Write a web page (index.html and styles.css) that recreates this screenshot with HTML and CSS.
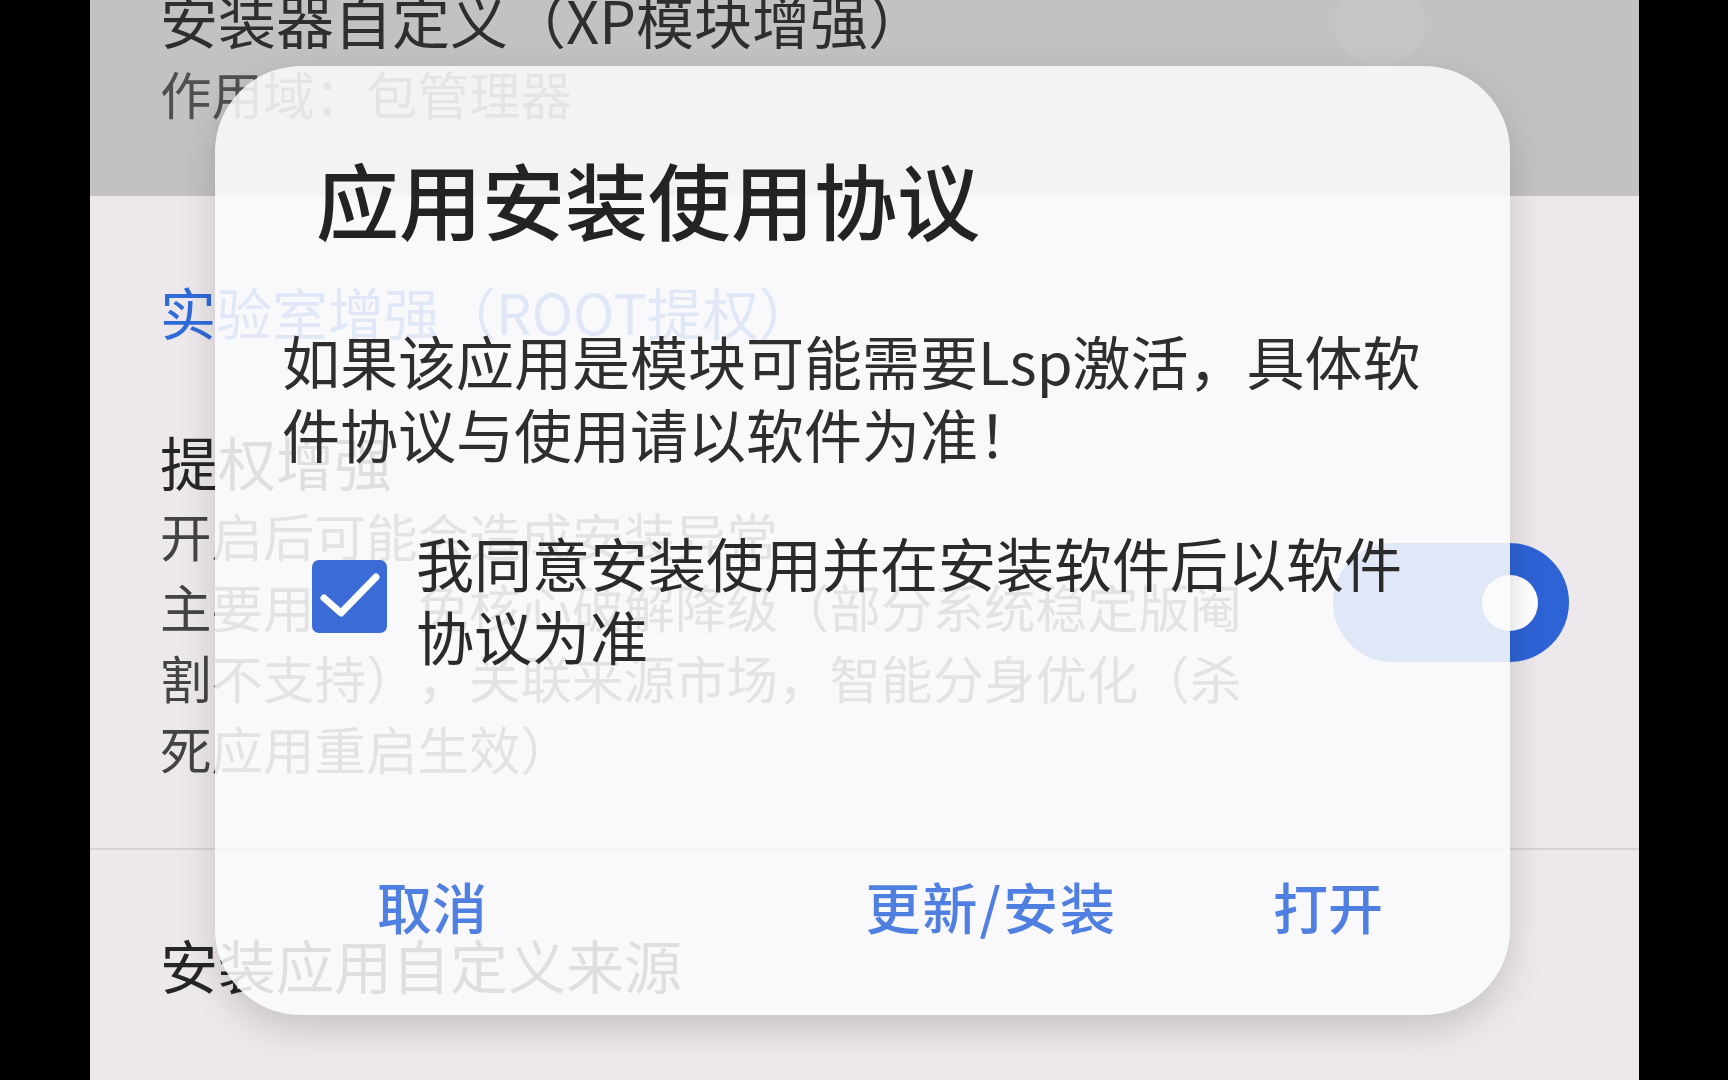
FILE: index.html
```html
<!DOCTYPE html>
<html lang="zh-CN">
<head>
  <meta charset="UTF-8" />
  <meta name="viewport" content="width=device-width, initial-scale=1.0"/>
  <title>安装器设置</title>
  <link rel="stylesheet" href="styles.css">
</head>
<body>
  <div class="screen">
    <div class="item item-dim">
      <div class="item-text">
        <div class="item-title">安装器自定义（XP模块增强）</div>
        <div class="item-sub">作用域：包管理器</div>
      </div>
      <div class="switch switch-off"><span class="thumb"></span></div>
    </div>

    <div class="section-title">实验室增强（ROOT提权）</div>

    <div class="item item-main">
      <div class="item-text">
        <div class="item-title">提权增强</div>
        <div class="item-desc">开启后可能会造成安装异常<br>主要用途：免核心破解降级（部分系统稳定版阉割不支持），关联来源市场，智能分身优化（杀死应用重启生效）</div>
      </div>
      <div class="switch switch-on"><span class="thumb"></span></div>
    </div>

    <div class="divider"></div>

    <div class="item item-last">
      <div class="item-title">安装应用自定义来源</div>
    </div>

    <!-- agreement dialog -->
    <div class="dialog">
      <div class="dialog-title">应用安装使用协议</div>
      <div class="dialog-body">如果该应用是模块可能需要Lsp激活，具体软件协议与使用请以软件为准！</div>
      <label class="agree">
        <svg class="checkbox" width="75" height="73" viewBox="0 0 75 73">
          <rect x="0" y="0" width="75" height="73" rx="7" fill="#3b6bd6"/>
          <polyline points="12,38 29,53 64,17" fill="none" stroke="#fff" stroke-width="7" stroke-linecap="round" stroke-linejoin="round"/>
        </svg>
        <span class="agree-text">我同意安装使用并在安装软件后以软件协议为准</span>
      </label>
      <div class="dialog-actions">
        <button class="btn btn-cancel">取消</button>
        <button class="btn btn-install">更新/安装</button>
        <button class="btn btn-open">打开</button>
      </div>
    </div>
  </div>
</body>
</html>
```

FILE: styles.css
```css
body {
  margin: 0;
  background: #000;
  font-family: "Noto Sans CJK SC", "Noto Sans", sans-serif;
  text-spacing-trim: space-all;
}
.screen {
  width: 1549px;
  height: 1080px;
  margin-left: 90px;
  background: #ece8ec;
  position: relative;
  overflow: hidden;
}
.item {
  display: flex;
  align-items: flex-start;
  gap: 60px;
  padding: 0 70px;
}
.item-text {
  flex: 1;
}
.item-title {
  font-size: 58px;
  line-height: 76px;
  color: #262626;
}
.item-sub,
.item-desc {
  font-size: 51.5px;
  line-height: 71px;
  color: #555;
}
.item-dim {
  height: 196px;
  box-sizing: border-box;
  background: #c3c1c4;
}
.item-dim .item-text {
  margin-top: -19px;
}
.item-dim .item-title {
  color: #2e2e2e;
}
.item-dim .item-sub {
  color: #505050;
}
.section-title {
  margin-top: 78px;
  padding: 0 70px;
  font-size: 56px;
  line-height: 73px;
  color: #2f6bd9;
}
.item-main {
  padding-top: 76px;
  padding-bottom: 65px;
}
.item-main .item-desc {
  color: #444;
}
.divider {
  height: 2px;
  background: #d6d2d6;
}
.item-last {
  padding-top: 76px;
}
.switch {
  width: 236px;
  height: 119px;
  border-radius: 60px;
  position: relative;
  flex-shrink: 0;
}
.switch .thumb {
  position: absolute;
  border-radius: 50%;
}
.switch-on {
  background: #2e63d6;
  margin-top: 120px;
}
.switch-on .thumb {
  width: 56px;
  height: 56px;
  right: 31px;
  top: 32px;
  background: #fff;
}
.switch-off {
  margin-top: -38px;
}
.switch-off .thumb {
  width: 90px;
  height: 90px;
  left: 2px;
  top: 15px;
  background: rgba(255, 255, 255, 0.08);
}

/* dialog */
.dialog {
  position: absolute;
  left: 125px;
  top: 66px;
  width: 1295px;
  box-sizing: border-box;
  padding: 82px 68px 73px 67px;
  border-radius: 86px;
  background: rgba(250, 250, 251, 0.87);
  box-shadow: 0 14px 36px rgba(0, 0, 0, 0.16);
}
.dialog-title {
  padding-left: 34px;
  font-size: 83px;
  line-height: 100px;
  font-weight: 500;
  color: #232323;
}
.dialog-body {
  margin-top: 76px;
  font-size: 58px;
  line-height: 73px;
  color: #2e2e2e;
}
.agree {
  display: flex;
  align-items: center;
  gap: 29px;
  margin-top: 56px;
  padding-left: 30px;
}
.checkbox {
  flex-shrink: 0;
  margin-top: -6px;
}
.agree-text {
  font-size: 58px;
  line-height: 73px;
  color: #2a2a2a;
}
.dialog-actions {
  display: flex;
  align-items: center;
  margin-top: 196px;
}
.btn {
  padding: 0;
  border: none;
  background: none;
  font-family: inherit;
  font-size: 55px;
  line-height: 74px;
  font-weight: 500;
  color: #4f7fe0;
  cursor: pointer;
}
.btn-cancel {
  margin-left: 95px;
}
.btn-install {
  margin-left: auto;
  letter-spacing: 2px;
}
.btn-open {
  margin-left: 156px;
  margin-right: 59px;
}
```
